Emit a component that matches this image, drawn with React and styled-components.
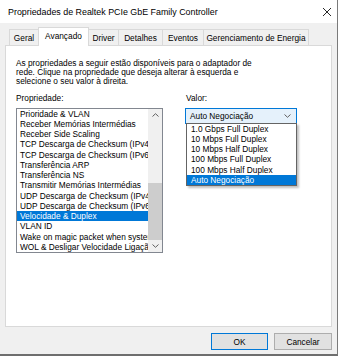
import React from "react";
import styled, { createGlobalStyle, css } from "styled-components";

const Global = createGlobalStyle`
  html, body { margin: 0; padding: 0; background: #f0f0f0; }
  body { width: 338px; height: 356px; overflow: hidden; }
  * { box-sizing: border-box; }
`;

const FONT = `"Liberation Sans", Arial, sans-serif`;

const Window = styled.div`
  width: 338px;
  height: 356px;
  background: #f0f0f0;
  border-right: 1px solid #7a7a7a;
  border-bottom: 2px solid #6e6e6e;
  display: flex;
  flex-direction: column;
  font-family: ${FONT};
  font-size: 8.3px;
  color: #000;
`;

const TitleBar = styled.div`
  height: 23px;
  background: #fff;
  display: flex;
  align-items: center;
  justify-content: space-between;
  padding: 0 5px 0 8px;
  flex: none;
`;

const Title = styled.div`
  font-size: 8.9px;
  line-height: 12px;
  padding-top: 1px;
  white-space: nowrap;
`;

const CloseIcon = () => (
  <svg width="10" height="10" viewBox="0 0 10 10" style={{ display: "block" }}>
    <path d="M1 1 L9 9 M9 1 L1 9" stroke="#111" strokeWidth="0.9" fill="none" />
  </svg>
);

const Body = styled.div`
  flex: 1;
  display: flex;
  flex-direction: column;
  padding: 0 5px;
`;

const TabStrip = styled.div`
  height: 22px;
  display: flex;
  align-items: flex-end;
  padding-left: 4px;
  position: relative;
  z-index: 1;
`;

const Tab = styled.div`
  width: ${(p) => p.$w}px;
  height: 16px;
  margin-left: -1px;
  &:first-child { margin-left: 0; }
  border: 1px solid #d9d9d9;
  border-bottom: none;
  background: #f0f0f0;
  display: flex;
  align-items: center;
  justify-content: center;
  white-space: nowrap;
  line-height: 10px;
  ${(p) =>
    p.$active &&
    css`
      height: 19px;
      margin-bottom: -1px;
      background: #fff;
      align-items: flex-start;
      padding-top: 3px;
      position: relative;
      z-index: 2;
    `}
`;

const Panel = styled.div`
  height: 282px;
  background: #fff;
  border: 1px solid #d9d9d9;
  padding: 13px 10px 0 10px;
  display: flex;
  flex-direction: column;
`;

const Intro = styled.div`
  line-height: 9.2px;
  white-space: nowrap;
`;

const Columns = styled.div`
  display: flex;
  gap: 22px;
  margin-top: 7.7px;
  align-items: flex-start;
`;

const Column = styled.div`
  display: flex;
  flex-direction: column;
  width: ${(p) => p.$w}px;
  margin-left: ${(p) => p.$ml || 0}px;
`;

const Label = styled.div`
  line-height: 9.2px;
  margin-bottom: 4px;
  padding-left: ${(p) => p.$pl || 0}px;
`;

const ListBox = styled.div`
  width: 147px;
  height: 145px;
  border: 1px solid #828790;
  display: flex;
  background: #fff;
`;

const Items = styled.div`
  flex: 1;
  overflow: hidden;
  display: flex;
  flex-direction: column;
`;

const Item = styled.div`
  height: 10.27px;
  line-height: 10.27px;
  padding-left: 3px;
  white-space: nowrap;
  flex: none;
  ${(p) =>
    p.$selected &&
    css`
      background: #0078d7;
      color: #fff;
    `}
`;

const ScrollBar = styled.div`
  width: 14px;
  background: #f0f0f0;
  display: flex;
  flex-direction: column;
`;

const ArrowBtn = styled.div`
  height: 12px;
  display: flex;
  align-items: center;
  justify-content: center;
  flex: none;
`;

const Track = styled.div`
  flex: 1;
  display: flex;
  flex-direction: column;
  justify-content: flex-end;
`;

const Thumb = styled.div`
  height: 57px;
  background: #cdcdcd;
`;

const Chevron = ({ up, color = "#606060", w = 7, h = 4 }) => (
  <svg width={w} height={h} viewBox="0 0 7 4" style={{ display: "block" }}>
    <path
      d={up ? "M0.5 3.5 L3.5 0.7 L6.5 3.5" : "M0.5 0.5 L3.5 3.3 L6.5 0.5"}
      stroke={color}
      strokeWidth="1"
      fill="none"
    />
  </svg>
);

const ComboWrap = styled.div`
  position: relative;
`;

const Combo = styled.div`
  height: 16px;
  width: 112px;
  border: 1px solid #0078d7;
  background: #e5f1fb;
  display: flex;
  align-items: center;
  justify-content: space-between;
  padding: 0 5px 0 4px;
  line-height: 10px;
`;

const DropList = styled.div`
  position: absolute;
  top: 15px;
  left: 1px;
  width: 111px;
  border: 1px solid #646464;
  background: #fff;
  box-shadow: 2px 2px 2px rgba(0, 0, 0, 0.25);
  display: flex;
  flex-direction: column;
  z-index: 5;
`;

const DropItem = styled.div`
  height: 10.3px;
  line-height: 10.3px;
  padding-left: 4px;
  white-space: nowrap;
  ${(p) =>
    p.$selected &&
    css`
      background: #0078d7;
      color: #fff;
    `}
`;

const ButtonRow = styled.div`
  display: flex;
  justify-content: flex-end;
  gap: 6px;
  margin-top: 6px;
`;

const Button = styled.div`
  width: ${(p) => p.$w}px;
  height: 17px;
  background: #e1e1e1;
  border: 1px solid ${(p) => (p.$primary ? "#0078d7" : "#adadad")};
  display: flex;
  align-items: center;
  justify-content: center;
  line-height: 10px;
`;

const tabs = [
  { label: "Geral", w: 30 },
  { label: "Avançado", w: 51, active: true },
  { label: "Driver", w: 31 },
  { label: "Detalhes", w: 45 },
  { label: "Eventos", w: 42 },
  { label: "Gerenciamento de Energia", w: 106 },
];

const props = [
  "Prioridade & VLAN",
  "Receber Memórias Intermédias",
  "Receber Side Scaling",
  "TCP Descarga de Checksum (IPv4)",
  "TCP Descarga de Checksum (IPv6)",
  "Transferência ARP",
  "Transferência NS",
  "Transmitir Memórias Intermédias",
  "UDP Descarga de Checksum (IPv4)",
  "UDP Descarga de Checksum (IPv6)",
  "Velocidade & Duplex",
  "VLAN ID",
  "Wake on magic packet when system is in the S0ix power state",
  "WOL & Desligar Velocidade Ligação",
];

const values = [
  "1.0 Gbps Full Duplex",
  "10 Mbps Full Duplex",
  "10 Mbps Half Duplex",
  "100 Mbps Full Duplex",
  "100 Mbps Half Duplex",
  "Auto Negociação",
];

export default function App() {
  return (
    <>
      <Global />
      <Window>
        <TitleBar>
          <Title>Propriedades de Realtek PCIe GbE Family Controller</Title>
          <CloseIcon />
        </TitleBar>
        <Body>
          <TabStrip>
            {tabs.map((t) => (
              <Tab key={t.label} $w={t.w} $active={t.active}>
                {t.label}
              </Tab>
            ))}
          </TabStrip>
          <Panel>
            <Intro>
              As propriedades a seguir estão disponíveis para o adaptador de
              <br />
              rede. Clique na propriedade que deseja alterar à esquerda e
              <br />
              selecione o seu valor à direita.
            </Intro>
            <Columns>
              <Column $w={147}>
                <Label>Propriedade:</Label>
                <ListBox>
                  <Items>
                    {props.map((p) => (
                      <Item key={p} $selected={p === "Velocidade & Duplex"}>
                        {p}
                      </Item>
                    ))}
                  </Items>
                  <ScrollBar>
                    <ArrowBtn>
                      <Chevron up />
                    </ArrowBtn>
                    <Track>
                      <Thumb />
                    </Track>
                    <ArrowBtn>
                      <Chevron />
                    </ArrowBtn>
                  </ScrollBar>
                </ListBox>
              </Column>
              <Column $w={112}>
                <Label $pl={1}>Valor:</Label>
                <ComboWrap>
                  <Combo>
                    <span>Auto Negociação</span>
                    <Chevron />
                  </Combo>
                  <DropList>
                    {values.map((v) => (
                      <DropItem key={v} $selected={v === "Auto Negociação"}>
                        {v}
                      </DropItem>
                    ))}
                  </DropList>
                </ComboWrap>
              </Column>
            </Columns>
          </Panel>
          <ButtonRow>
            <Button $w={57} $primary>
              OK
            </Button>
            <Button $w={58}>Cancelar</Button>
          </ButtonRow>
        </Body>
      </Window>
    </>
  );
}
